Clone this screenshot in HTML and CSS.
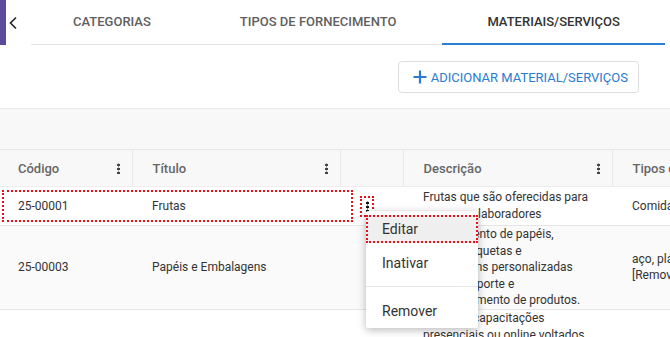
FILE: index.html
```html
<!DOCTYPE html>
<html lang="pt-BR">
<head>
    <meta charset="UTF-8">
    <meta name="viewport" content="width=device-width, initial-scale=1.0">
    <title>Materiais/Serviços</title>
    <link rel="stylesheet" href="styles.css">
</head>
<body>

    <!-- Barre d'onglets -->
    <div class="topbar">
        <div class="brand-strip"></div>
        <button class="back" aria-label="Voltar">
            <svg width="10" height="14" viewBox="0 0 10 14"><path d="M8 1.5 L2.5 7 L8 12.5" fill="none" stroke="#222" stroke-width="1.6"/></svg>
        </button>
        <nav class="tabs">
            <a class="tab first">Categorias</a>
            <a class="tab second">Tipos de fornecimento</a>
            <a class="tab active">Materiais/Serviços</a>
        </nav>
    </div>

    <div class="actions">
        <button class="add-btn">
            <svg width="14" height="14" viewBox="0 0 14 14"><path d="M7 0.5 V13.5 M0.5 7 H13.5" stroke="#2b7bcf" stroke-width="2.2"/></svg>
            <span>Adicionar material/serviços</span>
        </button>
    </div>

    <div class="toolbar"></div>

    <!-- Tabela de materiais -->
    <div class="grid">
        <table>
            <colgroup>
                <col class="c-code">
                <col class="c-title">
                <col class="c-act">
                <col class="c-desc">
                <col class="c-type">
            </colgroup>
            <thead>
                <tr>
                    <th class="first"><div class="th-in">Código <i class="kebab"></i></div></th>
                    <th><div class="th-in">Título <i class="kebab"></i></div></th>
                    <th></th>
                    <th><div class="th-in">Descrição <i class="kebab"></i></div></th>
                    <th><div class="th-in">Tipos de fornecimento</div></th>
                </tr>
            </thead>
            <tbody>
                <tr>
                    <td class="first">25-00001</td>
                    <td>Frutas</td>
                    <td class="act"><button class="row-menu focused"><i class="kebab dark"></i></button></td>
                    <td class="desc">Frutas que são oferecidas para nossos colaboradores</td>
                    <td class="type">Comida</td>
                </tr>
                <tr class="alt">
                    <td class="first">25-00003</td>
                    <td>Papéis e Embalagens</td>
                    <td class="act"><button class="row-menu"><i class="kebab"></i></button></td>
                    <td class="desc">Fornecimento de papéis, caixas, etiquetas e embalagens personalizadas para transporte e armazenamento de produtos.</td>
                    <td class="type">aço, plástico [Removido]</td>
                </tr>
                <tr>
                    <td class="first">25-00004</td>
                    <td>Treinamentos</td>
                    <td class="act"><button class="row-menu"><i class="kebab"></i></button></td>
                    <td class="desc">Cursos e capacitações presenciais ou online voltados para o desenvolvimento técnico e comportamental das equipes.</td>
                    <td class="type">Serviços</td>
                </tr>
            </tbody>
        </table>

        <div class="row-focus"></div>

        <ul class="menu">
            <li class="menu-item selected">Editar</li>
            <li class="menu-item gap">Inativar</li>
            <li class="divider"></li>
            <li class="menu-item">Remover</li>
        </ul>
    </div>

</body>
</html>
```

FILE: styles.css
```css
body {
    margin: 0;
    font-family: Roboto, 'Noto Sans', Arial, sans-serif;
    color: #333;
    background-color: #fff;
    width: 670px;
    height: 337px;
    overflow: hidden;
}

/* Onglets */
.topbar {
    display: flex;
    height: 45px;
}

.brand-strip {
    width: 6px;
    background-color: #5b4b9a;
}

.back {
    width: 25px;
    border: none;
    background: none;
    padding: 0 0 0 2px;
    display: flex;
    align-items: center;
    cursor: pointer;
}

.tabs {
    display: flex;
    flex: 1;
    margin-right: 5px;
    border-bottom: 1px solid #e3e3e3;
}

.tab {
    display: flex;
    align-items: center;
    flex-shrink: 0;
    white-space: nowrap;
    padding: 0 46px 0 45px;
    margin-bottom: -1px;
    border-bottom: 2px solid transparent;
    font-size: 13px;
    font-weight: 500;
    text-transform: uppercase;
    color: #606060;
    cursor: pointer;
}

.tab.first {
    padding-left: 42px;
}

.tab.second {
    padding-left: 43px;
}

.tab.active {
    flex: 1;
    padding-right: 0;
    color: #333;
    border-bottom-color: #2b7fd2;
}

/* Bouton ajouter */
.actions {
    display: flex;
    justify-content: flex-end;
    padding: 16px 31px 15px 0;
}

.add-btn {
    display: flex;
    align-items: center;
    gap: 4px;
    height: 32px;
    padding: 0 10px 0 14px;
    border: 1px solid #dedede;
    border-radius: 4px;
    background-color: #fff;
    color: #2b7bcf;
    font-family: inherit;
    font-size: 13px;
    text-transform: uppercase;
    cursor: pointer;
}

.toolbar {
    height: 40px;
    border-top: 1px solid #e8e8e8;
    background-color: #f8f8f8;
}

/* Tableau */
.grid {
    position: relative;
    overflow: hidden;
    height: 188px;
}

table {
    border-collapse: collapse;
    table-layout: fixed;
    width: 820px;
    font-size: 12px;
}

.c-code { width: 132px; }
.c-title { width: 208px; }
.c-act { width: 63px; }
.c-desc { width: 209px; }
.c-type { width: 208px; }

th {
    height: 36px;
    padding: 0 12px 0 20px;
    background-color: #f8f8f8;
    border-top: 1px solid #e8e8e8;
    border-bottom: 1px solid #ececec;
    border-right: 1px solid #e8e8e8;
    text-align: left;
    font-size: 13px;
    font-weight: 500;
    color: #666;
    white-space: nowrap;
}

th.first, td.first {
    padding-left: 18px;
}

.th-in {
    display: flex;
    align-items: center;
    justify-content: space-between;
}

td {
    height: 38px;
    padding: 0 14px 0 20px;
    line-height: 16.6px;
    border-bottom: 1px solid #e6e6e6;
    vertical-align: middle;
    color: #333;
}

td.desc {
    padding-right: 23px;
}

td.type {
    padding-right: 100px;
}

tr.alt td {
    background-color: #fafafa;
}

.kebab {
    display: block;
    width: 3px;
    height: 11px;
    background: radial-gradient(circle, #444 1.4px, transparent 1.6px) 0 0 / 3px 4px repeat-y;
}

.kebab.dark {
    background: radial-gradient(circle, #111 1.4px, transparent 1.6px) 0 0 / 3px 4px repeat-y;
}

td.act {
    padding-left: 20px;
}

.row-menu {
    display: flex;
    justify-content: center;
    align-items: center;
    width: 14px;
    height: 21px;
    padding: 0;
    border: none;
    background: none;
    cursor: pointer;
}

.row-menu.focused {
    outline: 2px dotted #e8101a;
    outline-offset: -2px;
}

/* Annotation de focus sur la ligne */
.row-focus {
    position: absolute;
    left: 2px;
    top: 41px;
    width: 347px;
    height: 28px;
    border: 2px dotted #e8101a;
}

/* Menu contextuel */
.menu {
    position: absolute;
    left: 366px;
    top: 62px;
    width: 112px;
    margin: 0;
    padding: 4px 0 3px;
    list-style: none;
    background-color: #fff;
    border-radius: 2px;
    box-shadow: 0 2px 8px rgba(0, 0, 0, 0.28);
    font-size: 14px;
}

.menu-item {
    height: 28px;
    line-height: 28px;
    padding-left: 16px;
    color: #333;
    cursor: pointer;
}

.menu-item.gap {
    margin-top: 6px;
}

.menu-item.selected {
    background-color: #efefef;
    outline: 2px dotted #e8101a;
    outline-offset: -2px;
}

.divider {
    height: 1px;
    margin: 9px 0 10px;
    background-color: #e6e6e6;
}
```
